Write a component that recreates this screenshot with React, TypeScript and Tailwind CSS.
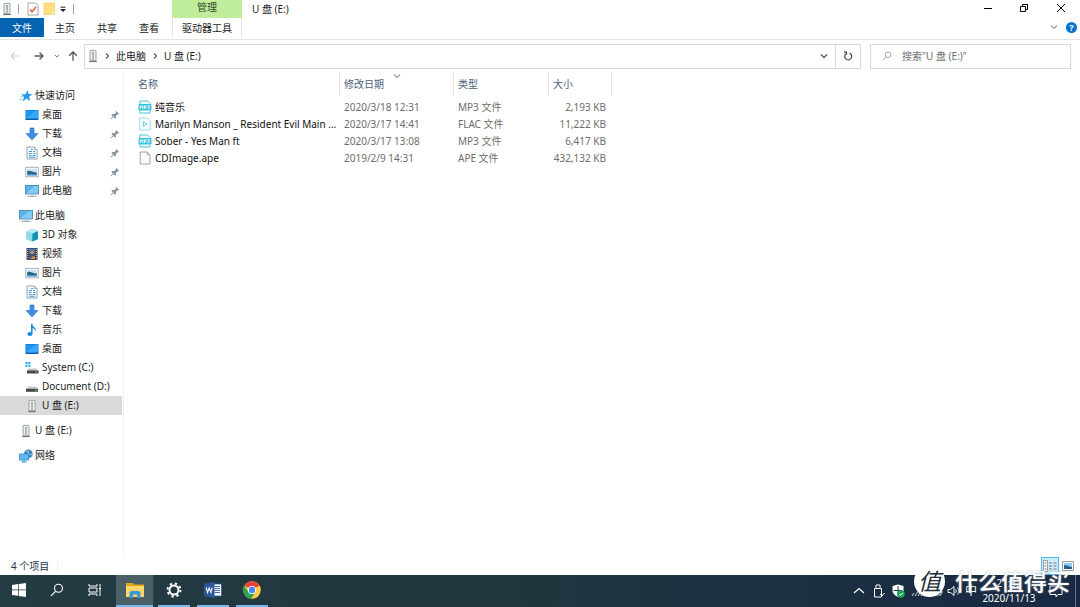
import React from "react";

type IconName =
  | "star" | "desktop" | "download" | "doc" | "picture" | "pc" | "cube" | "video"
  | "music" | "sysdrive" | "drive" | "usb" | "network";

function Icon({ name }: { name: IconName }) {
  const base = { viewBox: "0 0 14 14", className: "h-3.5 w-3.5 shrink-0", "aria-hidden": true } as const;
  switch (name) {
    case "star":
      return (
        <svg {...base}>
          <path d="M8.800 1.200l.8 3.800 4 .3-3.400 2.200.8 4.500-3.500-2.600L3.500 12.500 5 8.200 2.500 5.500l3.900-.2z" fill="#2a9ae6" />
          <path d="M1 8h3M.5 10.500h3M2 5.500h2" stroke="#7cc3f2" strokeWidth=".9" />
        </svg>
      );
    case "desktop":
      return (
        <svg {...base}>
          <rect x=".5" y="2" width="13" height="10" fill="#1070c4" />
          <rect x="1" y="2.500" width="12" height="8" fill="#1e96f0" />
          <path d="M1 10.500L11 2.500h2v8z" fill="#38a8fa" />
          <path d="M1 11.300h12" stroke="#0b4f94" strokeWidth=".8" />
        </svg>
      );
    case "download":
      return (
        <svg {...base}>
          <path d="M5 1h4v5.500h4L7 13 1 6.500h4z" fill="#3c8ee0" stroke="#2873c4" strokeWidth=".6" />
        </svg>
      );
    case "doc":
      return (
        <svg {...base}>
          <path d="M2 1h7.500L12 3.500V13H2z" fill="#fafbfc" stroke="#8f9aa3" strokeWidth=".9" />
          <path d="M9.500 1v2.500H12" fill="none" stroke="#8f9aa3" strokeWidth=".7" />
          <path d="M6 3.500h2M4 5.500h3M8 5.500h2M3.800 7.500h3M8 7.500h2.500M4 9.500h2.500M7.500 9.500h3M4 11.300h6" stroke="#3d9bd6" strokeWidth="1.100" />
        </svg>
      );
    case "picture":
      return (
        <svg {...base}>
          <rect x=".8" y="2.300" width="12.400" height="9.500" fill="#fff" stroke="#a0a6ab" strokeWidth=".9" />
          <rect x="2.200" y="3.800" width="9.600" height="6.500" fill="#c6e3f6" />
          <path d="M2.200 6c3-1 5 1.500 9.600 1.500v2.800H2.200z" fill="#2c6584" />
          <path d="M2.200 9h9.600v1.300H2.200z" fill="#3d92d8" />
        </svg>
      );
    case "pc":
      return (
        <svg {...base}>
          <rect x=".5" y="1.500" width="13" height="8.500" fill="#58b4ef" stroke="#3d7fae" strokeWidth=".8" />
          <path d="M1 9.500L10 2h3v7.500z" fill="#83cbf7" />
          <path d="M5.500 10h3v1.500h-3z" fill="#b8c4cb" />
          <path d="M2.500 12.300h9" stroke="#8fa4b0" strokeWidth="1.100" />
        </svg>
      );
    case "cube":
      return (
        <svg {...base}>
          <path d="M1 3.500L7.500 1 13 3v8l-5.500 2.500L1 11z" fill="#36b3cf" />
          <path d="M1 3.500L7.500 5.500v8L1 11z" fill="#8fdce8" />
          <path d="M7.500 5.500L13 3v8l-5.500 2.500z" fill="#1292b4" />
          <path d="M1 3.500L7.500 1 13 3 7.500 5.500z" fill="#bdeef4" />
        </svg>
      );
    case "video":
      return (
        <svg {...base}>
          <rect x="1.500" y="1" width="11" height="12" fill="#3c3f45" />
          <rect x="4" y="1.500" width="6" height="5.200" fill="#3f72b8" />
          <rect x="4" y="7.300" width="6" height="5.200" fill="#38558b" />
          <path d="M5 6l2-3 2 2v1.700H5zM5 12l3-3 2 1v2z" fill="#d0953c" />
          <path d="M2.700 2v10.500M11.300 2v10.500" stroke="#d4d7da" strokeWidth="1" strokeDasharray="1 1" />
        </svg>
      );
    case "music":
      return (
        <svg {...base}>
          <path d="M6.800 .8v10" stroke="#188be0" strokeWidth="1.500" />
          <path d="M6.500 .8c.4 3 5.500 3.400 4.200 8-.1-2.200-2.300-3.500-4.200-3.700z" fill="#188be0" />
          <ellipse cx="4.900" cy="11" rx="2.600" ry="2.100" fill="#188be0" />
        </svg>
      );
    case "sysdrive":
      return (
        <svg {...base}>
          <path d="M.5 1h2v2h-2zM3.300 1h2v2h-2zM.5 3.800h2v2h-2zM3.300 3.800h2v2h-2z" fill="#18a5e8" />
          <path d="M3.500 7.500h7.500L13 10H2z" fill="#c2c6c9" />
          <rect x="2" y="9.500" width="11.500" height="3" fill="#45494c" />
          <rect x="10.500" y="10.500" width="1.500" height="1" fill="#66e05d" />
        </svg>
      );
    case "drive":
      return (
        <svg {...base}>
          <path d="M3 6.500h8L13 9H1z" fill="#c7cbce" />
          <rect x="1" y="8.800" width="12" height="3" fill="#45494c" />
          <rect x="10.200" y="9.800" width="1.500" height="1" fill="#8fdc86" />
        </svg>
      );
    case "usb":
      return (
        <svg {...base}>
          <rect x="4" y="1.300" width="6" height="10.500" rx="1" fill="#eef0ee" stroke="#92979a" strokeWidth=".9" />
          <path d="M6 3.500h2v7.500H6z" fill="#b4bab5" />
          <rect x="6.300" y="3" width="1.400" height="1.500" fill="#5cba47" />
          <path d="M3.200 12.500h7.600" stroke="#6d7275" strokeWidth="1.200" />
        </svg>
      );
    case "network":
      return (
        <svg {...base}>
          <circle cx="9.300" cy="4.900" r="4.300" fill="#3e84b6" />
          <path d="M7 2.500c2-1 3 0 2.500 1.500S11 6 13 5.500" fill="none" stroke="#a5d6ee" strokeWidth="1" />
          <rect x=".5" y="5" width="9" height="6" fill="#5fbaf1" stroke="#2d8fd0" strokeWidth=".8" />
          <path d="M2.500 12.800h5M5 11v1.500" stroke="#4f9fd0" strokeWidth="1.200" />
        </svg>
      );
  }
}

function Pin() {
  return (
    <svg viewBox="0 0 10 10" className="h-2.5 w-2.5" aria-hidden="true">
      <path d="M6 .8L9.200 4l-1 .4-.7-.1-1.700 1.900.1 1.900-.8.7L1.400 4.900l.8-.8 1.900.1L6 2.500l-.2-.9z" fill="#8795a1" />
      <path d="M3.300 6.700L.8 9.200" stroke="#8795a1" strokeWidth="1" />
    </svg>
  );
}

function Chevron({ dir, className }: { dir: "right" | "down"; className: string }) {
  return (
    <svg viewBox="0 0 8 8" className={className} fill="none" stroke="currentColor" aria-hidden="true">
      <path d={dir === "right" ? "M3 1.500L5.500 4 3 6.500" : "M1 2.500l3 3 3-3"} strokeWidth="1.100" />
    </svg>
  );
}

function Magnifier({ className }: { className: string }) {
  return (
    <svg viewBox="0 0 14 14" className={className} fill="none" stroke="currentColor" aria-hidden="true">
      <circle cx="8.500" cy="5.300" r="4" strokeWidth="1.100" />
      <path d="M5.500 8.300L1 12.800" strokeWidth="1.200" />
    </svg>
  );
}

type Node = { icon: IconName; label: string; child?: boolean; pinned?: boolean; selected?: boolean };

const groups: Node[][] = [
  [
    { icon: "star", label: "快速访问" },
    { icon: "desktop", label: "桌面", child: true, pinned: true },
    { icon: "download", label: "下载", child: true, pinned: true },
    { icon: "doc", label: "文档", child: true, pinned: true },
    { icon: "picture", label: "图片", child: true, pinned: true },
    { icon: "pc", label: "此电脑", child: true, pinned: true },
  ],
  [
    { icon: "pc", label: "此电脑" },
    { icon: "cube", label: "3D 对象", child: true },
    { icon: "video", label: "视频", child: true },
    { icon: "picture", label: "图片", child: true },
    { icon: "doc", label: "文档", child: true },
    { icon: "download", label: "下载", child: true },
    { icon: "music", label: "音乐", child: true },
    { icon: "desktop", label: "桌面", child: true },
    { icon: "sysdrive", label: "System (C:)", child: true },
    { icon: "drive", label: "Document (D:)", child: true },
    { icon: "usb", label: "U 盘 (E:)", child: true, selected: true },
  ],
  [{ icon: "usb", label: "U 盘 (E:)" }],
  [{ icon: "network", label: "网络" }],
];

type FileKind = "mp3" | "flac" | "blank";

function FileIcon({ kind }: { kind: FileKind }) {
  if (kind === "mp3")
    return (
      <svg viewBox="0 0 14 14" className="h-3.5 w-3.5 shrink-0" aria-hidden="true">
        <path d="M2 4V1h7.500L12 3.500V4M2 10.500V13h10v-2.500" fill="#fff" stroke="#45c4dc" strokeWidth="1" />
        <rect x=".5" y="4" width="13" height="6.500" rx="1" fill="#3fc3dc" />
        <path d="M2.300 9V5.700l1.300 1.600 1.300-1.600V9M6.500 9V5.800h1a.9.900 0 010 1.800h-1M9.600 5.800h1.900L10.500 7.200c1.500 0 1.300 1.800-.9 1.500" fill="none" stroke="#fff" strokeWidth=".9" />
      </svg>
    );
  if (kind === "flac")
    return (
      <svg viewBox="0 0 14 14" className="h-3.5 w-3.5 shrink-0" aria-hidden="true">
        <path d="M1.700 1h8l2.500 2.500V13H1.700z" fill="#fff" stroke="#8bdae9" strokeWidth=".9" />
        <path d="M5.300 4.700l3.700 2.300-3.700 2.300z" fill="none" stroke="#4fc6de" strokeWidth=".9" />
      </svg>
    );
  return (
    <svg viewBox="0 0 14 14" className="h-3.5 w-3.5 shrink-0" aria-hidden="true">
      <path d="M2.200 1h7L12 3.800V13H2.200z" fill="#fcfcfc" stroke="#999" strokeWidth=".9" />
      <path d="M9.200 1v2.800H12" fill="none" stroke="#999" strokeWidth=".8" />
    </svg>
  );
}

const files: { kind: FileKind; name: string; date: string; type: string; size: string }[] = [
  { kind: "mp3", name: "纯音乐", date: "2020/3/18 12:31", type: "MP3 文件", size: "2,193 KB" },
  { kind: "flac", name: "Marilyn Manson _ Resident Evil Main ...", date: "2020/3/17 14:41", type: "FLAC 文件", size: "11,222 KB" },
  { kind: "mp3", name: "Sober - Yes Man ft", date: "2020/3/17 13:08", type: "MP3 文件", size: "6,417 KB" },
  { kind: "blank", name: "CDImage.ape", date: "2019/2/9 14:31", type: "APE 文件", size: "432,132 KB" },
];

function TitleBar() {
  return (
    <header className="flex h-10 shrink-0 border-b border-[#e2e3e4]">
      <div className="flex w-[172px] flex-col">
        <div className="flex h-[18px] items-center">
          <span className="flex w-[13px] justify-center"><Icon name="usb" /></span>
          <span className="ml-[5px] h-2.5 w-px bg-[#a5a5a5]" />
          <button aria-label="属性" className="ml-2">
            <svg viewBox="0 0 12 14" className="h-3.5 w-3">
              <path d="M1 1h7.500L11 3.500V13H1z" fill="#fff" stroke="#999" strokeWidth=".9" />
              <path d="M3 7.500l2 2.300L9 5" fill="none" stroke="#e0603b" strokeWidth="1.500" />
            </svg>
          </button>
          <button aria-label="新建文件夹" className="ml-1">
            <svg viewBox="0 0 12 14" className="h-3.5 w-3">
              <path d="M1 1h10.500v11.500H1z" fill="#ffdf7e" stroke="#e9c35a" strokeWidth=".6" />
              <path d="M8.500 13V9.500h2.700V12z" fill="#fbeab5" />
            </svg>
          </button>
          <button aria-label="自定义快速访问工具栏" className="ml-1">
            <svg viewBox="0 0 8 8" className="h-2 w-2">
              <path d="M1.500 2.200h5" stroke="#222" strokeWidth="1" />
              <path d="M1 4h6L4 7z" fill="#222" />
            </svg>
          </button>
          <span className="ml-1.5 h-2.5 w-px bg-[#a5a5a5]" />
        </div>
        <nav className="flex h-[19px] items-center" aria-label="功能区">
          <button className="h-[19px] w-11 bg-[#0563b1] text-white">文件</button>
          <button className="w-[42px]">主页</button>
          <button className="w-[42px]">共享</button>
          <button className="w-[42px]">查看</button>
        </nav>
      </div>
      <div className="flex w-[70px] flex-col">
        <div className="flex h-[18px] items-center justify-center bg-[#c0ed99] text-[#33482b]">
          <span className="pb-1">管理</span>
        </div>
        <button className="h-[19px] border-x border-[#e4e5e6]">驱动器工具</button>
      </div>
      <h1 className="h-[18px] flex-1 pl-2.5 leading-[18px]">U 盘 (E:)</h1>
      <div className="flex flex-col items-end">
        <div className="flex h-4 items-center text-black">
          <button aria-label="最小化" className="flex w-9 justify-center">
            <svg viewBox="0 0 10 10" className="h-2.5 w-2.5"><path d="M1 5.500h8" stroke="currentColor" /></svg>
          </button>
          <button aria-label="还原" className="flex w-9 justify-center">
            <svg viewBox="0 0 10 10" className="h-2.5 w-2.5" fill="none" stroke="currentColor">
              <path d="M1.500 3.500h5v5h-5zM3.500 3.500v-2h5v5h-2" />
            </svg>
          </button>
          <button aria-label="关闭" className="flex w-[38px] justify-center">
            <svg viewBox="0 0 10 10" className="h-2.5 w-2.5" stroke="currentColor"><path d="M1 1l8 8M9 1L1 9" /></svg>
          </button>
        </div>
        <div className="flex h-6 items-center gap-2 pr-[3px]">
          <button aria-label="展开功能区" className="text-[#999]"><Chevron dir="down" className="h-2 w-2" /></button>
          <button aria-label="帮助" className="flex h-[11px] w-[11px] items-center justify-center rounded-full bg-[#0873cc] text-[9px] leading-none font-bold text-white">?</button>
        </div>
      </div>
    </header>
  );
}

function AddressBar() {
  return (
    <div className="flex h-8 shrink-0 items-center pr-[9px]">
      <div className="flex w-[84px] items-center text-[#555]">
        <button aria-label="后退" className="ml-2.5 text-[#cfcfcf]">
          <svg viewBox="0 0 10 10" className="h-2.5 w-2.5" fill="none" stroke="currentColor" strokeWidth="1.200"><path d="M9.500 5H1M4.500 1.500L1 5l3.500 3.500" /></svg>
        </button>
        <button aria-label="前进" className="ml-3.5">
          <svg viewBox="0 0 10 10" className="h-2.5 w-2.5" fill="none" stroke="currentColor" strokeWidth="1.300"><path d="M.5 5H9M5.500 1.500L9 5 5.500 8.500" /></svg>
        </button>
        <button aria-label="最近浏览的位置" className="ml-2.5"><Chevron dir="down" className="h-1.5 w-1.5" /></button>
        <button aria-label="上移" className="ml-2">
          <svg viewBox="0 0 10 10" className="h-2.5 w-2.5" fill="none" stroke="currentColor" strokeWidth="1.300"><path d="M5 9.800V1M1.200 4.800L5 1l3.800 3.800" /></svg>
        </button>
      </div>
      <div className="flex h-[25px] flex-1 items-center border border-[#d9d9d9]">
        <span className="flex w-4 justify-center"><Icon name="usb" /></span>
        <Chevron dir="right" className="ml-0.5 h-2 w-2 text-[#555]" />
        <button className="ml-[5px]">此电脑</button>
        <Chevron dir="right" className="mx-[5px] h-2 w-2 text-[#555]" />
        <button>U 盘 (E:)</button>
        <button aria-label="上一个位置" className="mr-[7px] ml-auto text-[#444]"><Chevron dir="down" className="h-2 w-2" /></button>
        <button aria-label="刷新" className="flex h-full w-[25px] items-center justify-center border-l border-[#d9d9d9] text-[#444]">
          <svg viewBox="0 0 10 10" className="h-2.5 w-2.5" fill="none" stroke="currentColor" strokeWidth="1.200">
            <path d="M6.600 2.100A3.500 3.500 0 112.700 2.900M1 1.200h2.500v2.600" />
          </svg>
        </button>
      </div>
      <label className="ml-[9px] flex h-[25px] w-[201px] items-center border border-[#d9d9d9] pl-[11px] text-[#8a8a8a]">
        <Magnifier className="h-2.5 w-2.5 shrink-0" />
        <input aria-label="搜索" placeholder={'搜索"U 盘 (E:)"'} className="ml-2.5 w-full min-w-0 outline-none placeholder:text-[#6e6e6e]" />
      </label>
    </div>
  );
}

function Sidebar() {
  return (
    <nav aria-label="导航窗格" className="flex w-[124px] shrink-0 flex-col gap-1.5 border-r border-[#f1f1f1] pt-3.5">
      {groups.map((g, i) => (
        <ul key={i}>
          {g.map((n) => (
            <li key={n.label} className={n.selected ? "mr-px bg-[#d9d9d9]" : "mr-px"}>
              <a href="#" className={n.child ? "flex h-[19px] items-center gap-[3px] pl-[25px]" : "flex h-[19px] items-center gap-0.5 pl-[19px]"}>
                <Icon name={n.icon} />
                <span className="-mt-0.5 whitespace-nowrap">{n.label}</span>
                {n.pinned && <span className="mr-0.5 ml-auto"><Pin /></span>}
              </a>
            </li>
          ))}
        </ul>
      ))}
    </nav>
  );
}

function FileList() {
  const head = "relative h-6 border-r border-[#e5e5e5] pl-1 text-left font-normal";
  return (
    <main className="min-w-0 flex-1">
      <table className="w-[488px] table-fixed border-separate border-spacing-0">
        <colgroup>
          <col className="w-[216px]" /><col className="w-[114px]" /><col className="w-[95px]" /><col className="w-[63px]" />
        </colgroup>
        <thead className="text-[#4c607a]">
          <tr>
            <th scope="col" className="h-6 border-r border-[#e5e5e5] pl-3.5 text-left font-normal">名称</th>
            <th scope="col" className={head}>
              修改日期
              <Chevron dir="down" className="absolute top-0 left-[53px] h-2 w-2 text-[#999]" />
            </th>
            <th scope="col" className={head}>类型</th>
            <th scope="col" className={head}>大小</th>
          </tr>
          <tr aria-hidden="true"><td className="h-0.5" colSpan={4} /></tr>
        </thead>
        <tbody className="text-[#6d6d6d]">
          {files.map((f) => (
            <tr key={f.name} className="h-[17px]">
              <td className="p-0 pl-3.5 text-[#111]">
                <div className="flex items-center gap-[3px] whitespace-nowrap"><FileIcon kind={f.kind} />{f.name}</div>
              </td>
              <td className="p-0 pl-1 whitespace-nowrap">{f.date}</td>
              <td className="p-0 pl-1 whitespace-nowrap">{f.type}</td>
              <td className="p-0 pr-1.5 text-right whitespace-nowrap">{f.size}</td>
            </tr>
          ))}
        </tbody>
      </table>
    </main>
  );
}

function StatusBar() {
  return (
    <footer className="flex h-[18px] shrink-0 items-center justify-between pr-1.5 pl-[11px] text-[#26364d]">
      <div className="flex items-center gap-2">4 个项目<span className="h-2.5 w-px bg-[#eee]" /></div>
      <div className="flex h-full items-center">
        <button aria-label="详细信息" className="flex h-[18px] w-[18px] items-center justify-center border border-[#4fbbe8] bg-[#c9ebfa]">
          <svg viewBox="0 0 14 12" className="h-3 w-3.5">
            <path d="M.5.5h4v11h-4z" fill="#fff" stroke="#8a8a8a" strokeWidth=".8" />
            <path d="M1.500 3h2M1.500 6h2M1.500 9h2M6 3h3M10.500 3h3M6 6h3M10.500 6h3M6 9h3M10.500 9h3" stroke="#777" strokeWidth="1" />
          </svg>
        </button>
        <button aria-label="大图标" className="ml-[3px]">
          <svg viewBox="0 0 12 10" className="h-2.5 w-3">
            <path d="M.5.5h11v9H.5z" fill="#fff" stroke="#999" />
            <path d="M2 2h8v6H2z" fill="#8fc8f0" /><path d="M2 4.500c3-1 4 1.500 8 1.500v2H2z" fill="#225f87" />
          </svg>
        </button>
      </div>
    </footer>
  );
}

function TaskButton({ label, state, children }: { label: string; state: "idle" | "open" | "active"; children: React.ReactNode }) {
  const style = {
    idle: "w-[38px]",
    open: "w-[39px]",
    active: "w-[38px] border-r border-[#2d4249] bg-[#4b5f66]",
  }[state];
  return (
    <button aria-label={label} className={`flex h-full shrink-0 flex-col items-center ${style}`}>
      <span className="flex flex-1 items-center">{children}</span>
      <span className={state === "idle" ? "h-0.5 w-8" : state === "open" ? "h-0.5 w-8 bg-[#76b9ed]" : "h-0.5 w-full bg-[#76b9ed]"} />
    </button>
  );
}

function Taskbar() {
  return (
    <div className="relative flex h-8 shrink-0 items-stretch bg-linear-to-r from-[#233b43] via-[#20363f] to-[#182943] text-white">
      <TaskButton label="开始" state="idle">
        <svg viewBox="0 0 14 14" className="h-3.5 w-3.5" fill="#fff"><path d="M0 2l6-.9v5.500H0zM6.700 1L14 0v6.600H6.700zM0 7.300h6v5.500L0 12zM6.700 7.300H14V14l-7.300-1z" /></svg>
      </TaskButton>
      <TaskButton label="搜索" state="idle"><Magnifier className="h-3.5 w-3.5" /></TaskButton>
      <TaskButton label="任务视图" state="idle">
        <svg viewBox="0 0 14 14" className="h-3.5 w-3.5" fill="none" stroke="#fff" strokeWidth="1">
          <path d="M1 1v2h8V1M1 5h8v4H1zM1 13v-2h8v2M12 1v3M12 7v6" /><path d="M11 5.500h2" strokeWidth="1.800" />
        </svg>
      </TaskButton>
      <div className="ml-0.5 flex">
        <TaskButton label="文件资源管理器" state="active">
          <svg viewBox="0 0 18 15" className="h-[15px] w-[18px]">
            <path d="M0 0h7l1.500 1.500H18V14H0z" fill="#e9a21e" /><path d="M0 3h18v11H0z" fill="#ffd667" />
            <path d="M3.500 15V9.500L5 8h8l1.500 1.500V15H11v-3.500H7V15z" fill="#3b97dd" />
          </svg>
        </TaskButton>
        <TaskButton label="设置" state="open">
          <svg viewBox="0 0 16 16" className="h-4 w-4" fill="none" stroke="#fff">
            <circle cx="8" cy="8" r="4.500" strokeWidth="2" />
            <circle cx="8" cy="8" r="6.500" strokeWidth="2" strokeDasharray="2.300 2.805" />
          </svg>
        </TaskButton>
        <TaskButton label="Word" state="open">
          <svg viewBox="0 0 18 16" className="h-4 w-[18px]">
            <path d="M9 2h8.500v12H9z" fill="#fff" stroke="#2b579a" strokeWidth=".8" />
            <path d="M10.500 4.500H16M10.500 6.500H16M10.500 8.500H16M10.500 10.500H16" stroke="#2b579a" strokeWidth=".9" />
            <path d="M0 1.700L10.500 0v16L0 14.300z" fill="#2b579a" />
            <path d="M2.200 5.500L3.500 10.500 5.200 6l1.700 4.500 1.300-5" fill="none" stroke="#fff" strokeWidth="1.100" />
          </svg>
        </TaskButton>
        <TaskButton label="Chrome" state="open">
          <svg viewBox="0 0 18 18" className="h-[18px] w-[18px]">
            <circle cx="9" cy="9" r="8.800" fill="#ffcd40" />
            <path d="M9 9L1.400 4.600A8.800 8.800 0 0116.600 4.600z" fill="#e3453a" />
            <path d="M1.400 4.600A8.800 8.800 0 008.200 17.800L12.500 11 9 9 5.300 11z" fill="#30a352" />
            <path d="M9 5h7.900l-.3-.4H9z" fill="#e3453a" />
            <circle cx="9" cy="9" r="4.100" fill="#fff" /><circle cx="9" cy="9" r="3.200" fill="#4786ee" />
          </svg>
        </TaskButton>
      </div>
      <div className="ml-auto flex items-center">
        <button aria-label="显示隐藏的图标" className="mr-2">
          <svg viewBox="0 0 12 12" className="h-3 w-3" fill="none" stroke="#fff"><path d="M1 8L6 3.500 11 8" strokeWidth="1.200" /></svg>
        </button>
        <svg viewBox="0 0 12 14" className="mr-1.5 h-3.5 w-3" fill="none" stroke="#fff" aria-label="安全删除硬件">
          <path d="M3 4V1h4v3M1.500 4.500h7V13h-7zM7 10l2 2 2.500-3" />
        </svg>
        <svg viewBox="0 0 14 14" className="h-3.5 w-3.5" aria-label="安全中心">
          <path d="M7 .5l5.500 1.500v4.500C12.500 10 9 12 7 13 5 12 1.500 10 1.500 6.500V2z" fill="#fff" />
          <path d="M7 2v10M2.500 6.500h9" stroke="#26374a" /><circle cx="10" cy="10" r="3.700" fill="#19a35b" />
          <path d="M8.200 10l1.400 1.300 2.300-2.500" fill="none" stroke="#fff" />
        </svg>
        <svg viewBox="0 0 14 14" className="ml-1.5 h-3.5 w-3.5" fill="none" stroke="#d7dce3" aria-label="网络">
          <path d="M1 12l2-3M4 12l4-6M7 12l5-8M10 12l3-4" />
        </svg>
        <svg viewBox="0 0 14 14" className="ml-1 h-3.5 w-3.5" fill="none" stroke="#d7dce3" aria-label="电池">
          <path d="M1 5h11v6H1zM12 7h1v2h-1" />
        </svg>
        <svg viewBox="0 0 14 14" className="ml-1 h-3.5 w-3.5" fill="none" stroke="#fff" aria-label="音量">
          <path d="M1 5.500h2.500L7 2.500v9L3.500 8.500H1z" /><path d="M8.500 5c1 1 1 3 0 4M10.500 3.500c2 2 2 5 0 7" strokeWidth=".9" />
        </svg>
        <span className="ml-1 text-xs leading-none">中</span>
        <time className="ml-1 w-14 text-center leading-[15px]"><span className="block">21:32</span>2020/11/13</time>
        <button aria-label="通知" className="mr-3 ml-3">
          <svg viewBox="0 0 14 14" className="h-3.5 w-3.5" fill="none" stroke="#fff"><path d="M1 2h12v8.500H9L7 13v-2.500H1z" /></svg>
        </button>
        <span className="mr-1 h-full w-px bg-[#647181]" />
      </div>
      <div className="pointer-events-none absolute right-2.5 bottom-2.5 flex items-center gap-2.5 text-white">
        <span className="flex h-[31px] w-[31px] items-center justify-center rounded-full bg-white text-[23px] leading-none text-[#222c35] italic [text-shadow:none]">值</span>
        <span className="text-[23px] leading-none font-medium whitespace-nowrap [text-shadow:0_0_2px_#9aa5ae]">什么值得买</span>
      </div>
    </div>
  );
}

export default function App() {
  return (
    <div className="flex h-screen flex-col overflow-hidden bg-white font-['Noto_Sans','Noto_Sans_CJK_SC',sans-serif] text-[10px] leading-[14px] text-[#1a1a1a]">
      <TitleBar />
      <AddressBar />
      <div className="flex min-h-0 flex-1">
        <Sidebar />
        <FileList />
      </div>
      <StatusBar />
      <Taskbar />
    </div>
  );
}
